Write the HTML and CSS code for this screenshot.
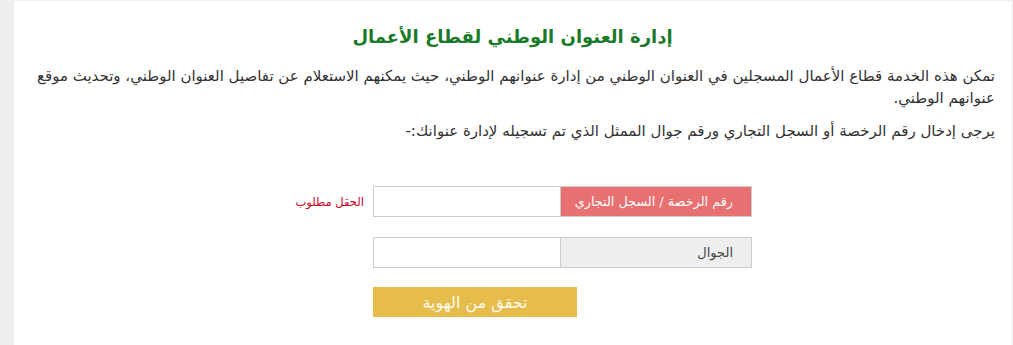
FILE: index.html
```html
<!DOCTYPE html>
<html lang="ar" dir="rtl">
<head>
<meta charset="utf-8">
<link rel="stylesheet" href="styles.css">
</head>
<body>
<div class="panel">
  <h1 class="title">إدارة العنوان الوطني لقطاع الأعمال</h1>
  <p class="intro">تمكن هذه الخدمة قطاع الأعمال المسجلين في العنوان الوطني من إدارة عنوانهم الوطني، حيث يمكنهم الاستعلام عن تفاصيل العنوان الوطني، وتحديث موقع عنوانهم الوطني.</p>
  <p class="intro">يرجى إدخال رقم الرخصة أو السجل التجاري ورقم جوال الممثل الذي تم تسجيله لإدارة عنوانك:-</p>
  <form class="form">
    <div class="row">
      <div class="group">
        <span class="addon addon-error">رقم الرخصة / السجل التجاري</span>
        <input class="field" type="text">
      </div>
      <span class="req">الحقل مطلوب</span>
    </div>
    <div class="row">
      <div class="group">
        <span class="addon">الجوال</span>
        <input class="field" type="text">
      </div>
    </div>
    <div class="row">
      <div class="actions">
        <button class="btn" type="button">تحقق من الهوية</button>
      </div>
    </div>
  </form>
</div>
</body>
</html>
```
FILE: styles.css
```css
html, body {
  margin: 0;
  padding: 0;
  background: #eeeeee;
  height: 100%;
}
body {
  font-family: "DejaVu Sans", "Noto Sans", sans-serif;
  color: #333333;
  overflow: hidden;
}
.panel {
  background: #ffffff;
  margin: 1px 1px 0 14px;
  height: 344px;
  padding: 0 17px 0 16px;
  box-sizing: border-box;
  direction: rtl;
}
.title {
  margin: 0;
  padding-top: 23px;
  text-align: center;
  font-size: 18px;
  font-weight: bold;
  color: #1a7a2a;
  line-height: 26px;
}
.intro {
  margin: 0;
  font-size: 15px;
  line-height: 22px;
}
.intro:first-of-type {
  margin-top: 15px;
}
.intro + .intro {
  margin-top: 11px;
}
.form {
  margin-top: 44px;
  padding-right: 243px;
  display: flex;
  flex-direction: column;
  gap: 20px;
}
.row {
  display: flex;
  align-items: center;
  gap: 9px;
}
.group {
  display: flex;
  width: 379px;
  height: 31px;
  border: 1px solid #cccccc;
  box-sizing: border-box;
}
.addon {
  flex: 0 0 191px;
  box-sizing: border-box;
  background: #eeeeee;
  border-left: 1px solid #cccccc;
  font-size: 13px;
  padding-right: 18px;
  display: flex;
  align-items: center;
  color: #444444;
}
.addon-error {
  background: #e87070;
  color: #ffffff;
  font-size: 12.8px;
}
.field {
  flex: 1 1 auto;
  min-width: 0;
  width: 0;
  border: 0;
  margin: 0;
  padding: 0 8px;
  background: #ffffff;
  outline: none;
}
.req {
  color: #cc0022;
  font-size: 11.5px;
}
.actions {
  width: 379px;
  display: flex;
  justify-content: flex-end;
}
.btn {
  width: 204px;
  height: 30px;
  border: 0;
  background: #e6bc4c;
  color: #fffbea;
  font-family: "DejaVu Sans", sans-serif;
  font-size: 16px;
  padding: 0;
  margin-top: -1px;
}
```
